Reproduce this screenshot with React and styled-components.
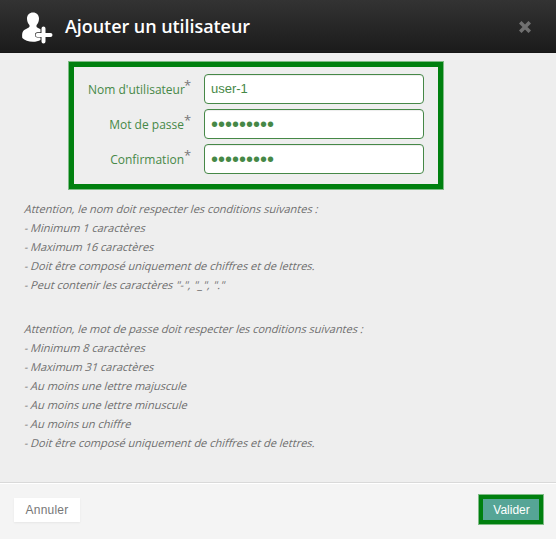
import React from "react";
import styled, { createGlobalStyle } from "styled-components";

const GlobalStyle = createGlobalStyle`
  * { box-sizing: border-box; }
  body { margin: 0; background: #eee; }
`;

const Dialog = styled.div`
  display: flex;
  flex-direction: column;
  width: 556px;
  height: 539px;
  background: #eee;
  font-family: "Open Sans", "Noto Sans", sans-serif;
  color: #777;
`;

const Header = styled.header`
  display: flex;
  align-items: center;
  flex: 0 0 53px;
  padding: 0 25px 0 22px;
  background: linear-gradient(#333, #1b1b1b);
  border-bottom: 1px solid #161616;
`;

const UserIcon = styled.svg`
  width: 31px;
  height: 32px;
  margin-top: 3px;
`;

const Title = styled.h1`
  flex: 1;
  margin: 0 0 0 12px;
  color: #fff;
  font-size: 18px;
  font-weight: 600;
  line-height: 24px;
  letter-spacing: -0.06px;
`;

const CloseButton = styled.button`
  display: flex;
  margin: 2px 0 0;
  padding: 0;
  border: 0;
  background: none;
`;

const Body = styled.main`
  flex: 1;
  padding: 8px 0 0;
`;

const Fields = styled.form`
  display: flex;
  flex-direction: column;
  gap: 5px;
  width: 376px;
  height: 129px;
  margin-left: 68px;
  padding: 7px 14px 0;
  border: 6px solid #00800f;
  outline: 1px solid #7fbc86;
  outline-offset: -1px;
`;

const Field = styled.label`
  display: grid;
  grid-template-columns: 96px 6px 220px;
  height: 30px;
  color: #468847;
  font-size: 12px;
  line-height: 32px;
`;

const Caption = styled.span`
  text-align: right;
  white-space: nowrap;
`;

const Required = styled.span`
  color: #777;
  font-size: 13px;
  line-height: 23px;
`;

const Input = styled.input`
  width: 220px;
  height: 30px;
  margin-left: 14px;
  padding: 0 6px 1px;
  border: 1px solid #468847;
  border-radius: 4px;
  outline: 0;
  background: #fff;
  box-shadow: inset 0 1px 1px rgba(0, 0, 0, 0.075);
  color: #468847;
  font: 13px "Liberation Sans", Arial, sans-serif;

  &[type="password"] {
    padding-bottom: 0;
    font-size: 20px;
  }
`;

const Rules = styled.div`
  margin: ${({ $gap }) => $gap} 0 0 25px;
  color: #6e6e6e;
  font-size: 11px;
  line-height: 19px;
`;

const Rule = styled.div`
  width: max-content;
  white-space: nowrap;
  transform: skewX(-16deg);
`;

const Footer = styled.footer`
  display: flex;
  align-items: flex-start;
  justify-content: space-between;
  flex: 0 0 57px;
  padding: 11px 12px 0 14px;
  background: #f4f4f4;
  border-top: 1px solid #d9d9d9;
  box-shadow: inset 0 1px 0 #fff;
`;

const Button = styled.button`
  height: 24px;
  padding: 0;
  border: 0;
  font: 12px "Liberation Sans", Arial, sans-serif;
  letter-spacing: 0.2px;
`;

const CancelButton = styled(Button)`
  width: 66px;
  margin-top: 4px;
  background: #fff;
  box-shadow: 0 1px 2px rgba(0, 0, 0, 0.06);
  color: #777;
`;

const SubmitButton = styled(Button)`
  width: 66px;
  height: 31px;
  padding-left: 1px;
  border: 5px solid #00800f;
  outline: 1px solid #7fbc86;
  outline-offset: -1px;
  background: #56a596;
  color: #fff;
  letter-spacing: 0;
`;

const FIELDS = [
  { label: "Nom d'utilisateur", type: "text", value: "user-1" },
  { label: "Mot de passe", type: "password", value: "Passe1234" },
  { label: "Confirmation", type: "password", value: "Passe1234" },
];

const NAME_RULES = [
  "Attention, le nom doit respecter les conditions suivantes :",
  "- Minimum 1 caractères",
  "- Maximum 16 caractères",
  "- Doit être composé uniquement de chiffres et de lettres.",
  '- Peut contenir les caractères "-", "_", "."',
];

const PASSWORD_RULES = [
  "Attention, le mot de passe doit respecter les conditions suivantes :",
  "- Minimum 8 caractères",
  "- Maximum 31 caractères",
  "- Au moins une lettre majuscule",
  "- Au moins une lettre minuscule",
  "- Au moins un chiffre",
  "- Doit être composé uniquement de chiffres et de lettres.",
];

function RuleList({ lines, gap }) {
  return (
    <Rules $gap={gap}>
      {lines.map((line) => (
        <Rule key={line}>{line}</Rule>
      ))}
    </Rules>
  );
}

export default function App() {
  return (
    <Dialog>
      <GlobalStyle />
      <Header>
        <UserIcon viewBox="0 0 31 32" aria-hidden="true">
          <path
            fill="#fff"
            d="M11 0.5C14.6 0.5 17 3 17 6.6C17 9 16.2 11.2 14.8 12.8C14.2 13.8 14.4 15 15.2 15.6L18.5 17.2V20.2H15.5C13.7 20.2 13 21.2 13 22.8C13 24.6 13.8 25.6 15.5 25.6H18.5V28C16.5 29.2 13.8 29.8 11 29.8C6.500 29.800 2.500 28.200 0.300 26C-0.200 22.500 0.200 19.500 2.200 18.100L6.800 15.600C7.700 15 7.900 13.800 7.200 12.800C5.800 11.200 5 9 5 6.600C5 3 7.400 0.500 11 0.500Z"
          />
          <path d="M21.500 16.500V29.500M15.500 23H28.500" stroke="#fff" strokeWidth="4" strokeLinecap="round" />
        </UserIcon>
        <Title>Ajouter un utilisateur</Title>
        <CloseButton aria-label="Fermer">
          <svg width="12" height="12" viewBox="0 0 12 12">
            <path d="M2.500 2.500L9.500 9.500M9.500 2.500L2.500 9.500" stroke="#707070" strokeWidth="3.600" strokeLinecap="square" strokeLinejoin="round" />
          </svg>
        </CloseButton>
      </Header>
      <Body>
        <Fields>
          {FIELDS.map(({ label, type, value }) => (
            <Field key={label}>
              <Caption>{label}</Caption>
              <Required>*</Required>
              <Input type={type} defaultValue={value} />
            </Field>
          ))}
        </Fields>
        <RuleList lines={NAME_RULES} gap="9px" />
        <RuleList lines={PASSWORD_RULES} gap="25px" />
      </Body>
      <Footer>
        <CancelButton>Annuler</CancelButton>
        <SubmitButton>Valider</SubmitButton>
      </Footer>
    </Dialog>
  );
}
